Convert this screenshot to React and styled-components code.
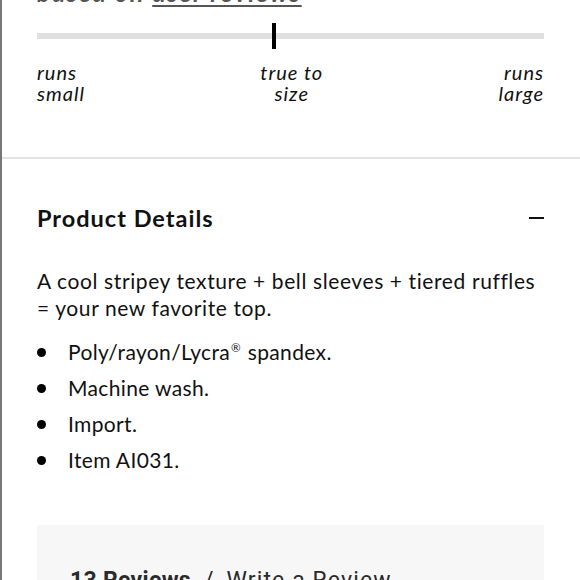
import React from "react";
import styled, { createGlobalStyle } from "styled-components";

const Global = createGlobalStyle`
  html, body { margin: 0; padding: 0; background: #fff; }
  body { font-family: Lato, "Noto Sans", sans-serif; color: #111; }
`;

const Page = styled.div`
  width: 580px;
  height: 580px;
  box-sizing: border-box;
  border-left: 2px solid #777;
  overflow: hidden;
  display: flex;
  flex-direction: column;
`;

const FitSection = styled.section`
  flex: none;
  padding: 0 36px 0 35px;
  border-bottom: 2px solid #e4e4e4;
  height: 159px;
  box-sizing: border-box;
`;

const FitCaption = styled.div`
  margin-top: -22px;
  font-size: 25px;
  line-height: 28px;
  font-style: italic;
  font-weight: 700;
  letter-spacing: 1.7px;
  color: #555;
  white-space: nowrap;
  a {
    color: #555;
    text-decoration: underline;
    text-decoration-thickness: 2px;
    text-underline-offset: 3px;
  }
`;

const Track = styled.div`
  position: relative;
  margin-top: 27px;
  height: 6px;
  background: #e0e0e0;
`;

const Marker = styled.span`
  position: absolute;
  top: -10px;
  width: 4px;
  height: 26px;
  background: #000;
  transform: translateX(-50%);
`;

const Labels = styled.div`
  display: flex;
  justify-content: space-between;
  margin-top: 23px;
`;

const Label = styled.div`
  font-size: 20px;
  line-height: 21px;
  font-style: italic;
  color: #111;
  text-align: ${(p) => p.$align};
  letter-spacing: 1px;
`;

const Details = styled.section`
  padding: 0 36px 0 35px;
  flex: 1;
`;

const Header = styled.div`
  display: flex;
  align-items: center;
  justify-content: space-between;
  margin-top: 44px;
  height: 30px;
`;

const Title = styled.h2`
  margin: 0;
  font-size: 23.5px;
  font-weight: 700;
  letter-spacing: 1px;
  color: #111;
`;

const Minus = styled.span`
  width: 15px;
  height: 2.5px;
  background: #111;
`;

const Description = styled.p`
  margin: 34px 0 0;
  font-size: 21px;
  line-height: 27px;
  letter-spacing: 0.6px;
  color: #111;
`;

const List = styled.ul`
  list-style: none;
  margin: 19px 0 0;
  padding: 0;
  display: flex;
  flex-direction: column;
  gap: 12px;
`;

const Item = styled.li`
  display: flex;
  align-items: center;
  gap: 22px;
  font-size: 21px;
  line-height: 24px;
  letter-spacing: 0.35px;
  color: #111;
  &::before {
    content: "";
    width: 9px;
    height: 9px;
    border-radius: 50%;
    background: #000;
    flex: none;
  }
`;

const Sup = styled.sup`
  font-size: 0.55em;
  line-height: 0;
  vertical-align: 0.7em;
  margin: 0 1px;
`;

const ReviewsBox = styled.div`
  margin-top: 53px;
  background: #f7f7f7;
  padding: 43px 33px;
  height: 120px;
`;

const ReviewsLine = styled.div`
  font-family: Roboto, "Liberation Sans", sans-serif;
  font-size: 23px;
  line-height: 26px;
  letter-spacing: 1.1px;
  color: #2a2a2a;
  white-space: nowrap;
`;

const ReviewCount = styled.b`
  font-weight: 700;
  letter-spacing: 0.3px;
`;

const Slash = styled.span`
  margin: 0 12px 0 13px;
`;

const items = [
  <>Poly/rayon/Lycra<Sup>®</Sup> spandex.</>,
  "Machine wash.",
  "Import.",
  "Item AI031.",
];

export default function App() {
  return (
    <>
      <Global />
      <Page>
        <FitSection>
          <FitCaption>
            based on <a>user reviews</a>
          </FitCaption>
          <Track>
            <Marker style={{ left: "46.7%" }} />
          </Track>
          <Labels>
            <Label $align="left">runs<br />small</Label>
            <Label $align="center">true to<br />size</Label>
            <Label $align="right">runs<br />large</Label>
          </Labels>
        </FitSection>
        <Details>
          <Header>
            <Title>Product Details</Title>
            <Minus />
          </Header>
          <Description>
            A cool stripey texture + bell sleeves + tiered ruffles = your new favorite top.
          </Description>
          <List>
            {items.map((t, i) => (
              <Item key={i}><span>{t}</span></Item>
            ))}
          </List>
          <ReviewsBox>
            <ReviewsLine>
              <ReviewCount>13 Reviews</ReviewCount><Slash>/</Slash>Write a Review
            </ReviewsLine>
          </ReviewsBox>
        </Details>
      </Page>
    </>
  );
}
